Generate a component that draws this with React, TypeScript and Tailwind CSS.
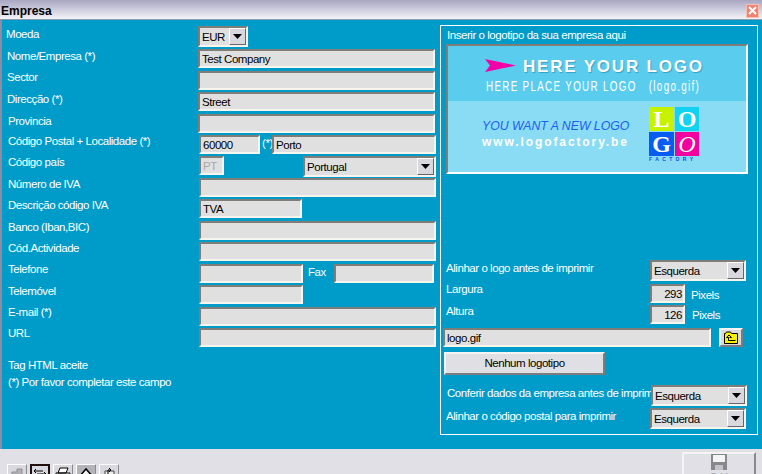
import type { ReactNode } from 'react';

const sunken =
  'border-2 border-t-[#807c78] border-l-[#807c78] border-r-[#f6f6ee] border-b-[#f6f6ee] bg-[#e0e0e0] text-black overflow-hidden whitespace-nowrap';

function Field({ className = '', children }: { className?: string; children?: ReactNode }) {
  return <div className={`${sunken} h-[19px] leading-[16px] pl-[2px] shrink-0 ${className}`}>{children}</div>;
}

function Select({ value, className = '' }: { value: string; className?: string }) {
  return (
    <div className={`${sunken} h-[21px] leading-[18px] pl-[2px] shrink-0 flex justify-between ${className}`}>
      <span>{value}</span>
      <div className="w-[17px] h-[17px] bg-[#d8d8de] border border-t-white border-l-white border-r-[#66666a] border-b-[#66666a] flex items-center justify-center">
        <svg width="9" height="5" viewBox="0 0 9 5">
          <path d="M0 0h9L4.500 5z" fill="#000" />
        </svg>
      </div>
    </div>
  );
}

function Row({ label, h, labelCls = '-mt-[2px]', children }: { label: string; h: string; labelCls?: string; children?: ReactNode }) {
  return (
    <div className={`flex items-start ${h}`}>
      <div className={`w-[192px] h-4 leading-4 shrink-0 pl-[1px] ${labelCls}`}>{label}</div>
      {children}
    </div>
  );
}

function LogoBanner() {
  return (
    <div className="w-[302px] h-[130px] border-2 border-t-[#807c78] border-l-[#807c78] border-r-white border-b-white flex flex-col whitespace-nowrap tracking-normal shadow-[inset_0_0_3px_#3aa8cc] font-['Liberation_Sans',sans-serif]">
      <div className="h-[55px] bg-[#5acdee] flex flex-col shrink-0">
        <div className="flex items-center h-[24px] mt-[9px]">
          <svg width="31" height="14" viewBox="0 0 31 14" className="ml-[37px] -mt-[2px] shrink-0">
            <path d="M0 0L31 6.500 0 13 5 6.500z" fill="#f400a8" />
          </svg>
          <span className="ml-[7px] text-[17px] leading-[24px] font-bold tracking-[1.8px] text-white [text-shadow:1px_1px_1px_#3a9dc0]">
            HERE YOUR LOGO
          </span>
        </div>
        <div className="ml-[38px] -mt-[1px] w-fit origin-left scale-x-[0.7] text-[14px] leading-[16px] tracking-[1.9px] text-white">
          HERE PLACE YOUR LOGO &nbsp;&nbsp;(logo.gif)
        </div>
      </div>
      <div className="flex-1 bg-[#8adcf4] flex">
        <div className="w-[201px] shrink-0 pl-[34px] pt-[17px]">
          <div className="text-[12.250px] leading-[16px] italic text-[#1a5ff0]">YOU WANT A NEW LOGO</div>
          <div className="text-[12px] leading-[14px] mt-[1px] font-bold tracking-[1.900px] text-white">www.logofactory.be</div>
        </div>
        <div className="pt-[6px] w-[50px]">
          <div className="grid grid-cols-[25px_24px] grid-rows-[24px_24px] gap-[1px] font-['Liberation_Serif',serif] font-bold text-[24px] leading-[24px] text-center text-white">
            <div className="bg-[#c6f200]">L</div>
            <div className="bg-[#12d2f4]">O</div>
            <div className="bg-[#0a5cf0]">G</div>
            <div className="bg-[#f400a0] italic font-normal">O</div>
          </div>
          <div className="text-[5px] leading-[6px] font-bold tracking-[3.400px] text-[#0a4ce0]">FACTORY</div>
        </div>
      </div>
    </div>
  );
}

function ToolButton({ active, dark, children }: { active?: boolean; dark?: boolean; children: ReactNode }) {
  const bg = dark ? 'bg-[#b4b4b8]' : 'bg-[#d8d8de]';
  return (
    <div
      className={`w-[20px] h-[20px] shrink-0 flex justify-center pt-[2px] ${bg} ${
        active
          ? 'border-2 border-[#201010]'
          : 'border border-t-white border-l-white border-r-[#8a8a90] border-b-[#8a8a90]'
      }`}
    >
      {children}
    </div>
  );
}

export default function App() {
  return (
    <div className="w-[762px] h-[474px] overflow-hidden bg-[#e0e0e6] text-[11.500px] tracking-[-0.45px] text-white font-['Liberation_Sans',sans-serif]">
      {/* title bar */}
      <div className="h-[19px] bg-linear-to-b from-[#a8a6c2] to-[#f4f4f8] flex items-center justify-between pl-[1px] pr-[3px]">
        <span className="text-black text-[12px] tracking-normal font-bold leading-4 mt-[2px]">Empresa</span>
        <div className="w-[13px] h-[14px] mt-[2px] bg-[#f08272] border border-[#f6c0b0] flex items-center justify-center">
          <svg width="9" height="9" viewBox="0 0 9 9">
            <path d="M1 1l7 7M8 1L1 8" stroke="#fff" strokeWidth="2" />
          </svg>
        </div>
      </div>

      {/* main blue panel */}
      <div className="h-[430px] bg-[#009cc9] border-l-2 border-t border-l-[#8c8ca4] border-t-[#8c9cb0] flex">
        <div className="w-[438px] shrink-0 pl-[3px] pt-[6px]">
          <div className="flex items-start h-[23px]">
            <div className="w-[193px] h-4 leading-4 pl-[1px] shrink-0">Moeda</div>
            <Select value="EUR" className="w-[50px]" />
          </div>
          <div className="pl-[1px]">
            <Row label="Nome/Empresa (*)" h="h-[22px]" labelCls="-mt-[1px]"><Field className="w-[237px]">Test Company</Field></Row>
            <Row label="Sector" h="h-[21px]"><Field className="w-[237px]" /></Row>
            <Row label="Direcção (*)" h="h-[22px]" labelCls="-mt-[1px]"><Field className="w-[237px]">Street</Field></Row>
            <Row label="Provincia" h="h-[21px]" labelCls="-mt-[1px] ml-[1px] -mr-[1px]"><Field className="w-[237px]" /></Row>
            <Row label="Código Postal + Localidade (*)" h="h-[21px]" labelCls="-mt-[2px] ml-[1px] -mr-[1px]">
              <Field className="w-[61px] ml-[1px]">60000</Field>
              <span className="ml-[2px] w-[10px] leading-[17px]">(*)</span>
              <Field className="w-[164px]">Porto</Field>
            </Row>
            <Row label="Código país" h="h-[22px]" labelCls="-mt-[2px] ml-[1px] -mr-[1px]">
              <Field className="w-[25px] ml-[1px] text-[#a8a8a8]!">PT</Field>
              <Select value="Portugal" className="w-[133px] ml-[79px]" />
            </Row>
            <Row label="Número de IVA" h="h-[21px]" labelCls="-mt-[2px] ml-[1px] -mr-[1px]"><Field className="w-[237px] ml-[1px]" /></Row>
            <Row label="Descrição código IVA" h="h-[22px]" labelCls="-mt-[2px] ml-[1px] -mr-[1px]"><Field className="w-[103px] ml-[1px]">TVA</Field></Row>
            <Row label="Banco (Iban,BIC)" h="h-[21px]" labelCls="-mt-[2px] ml-[1px] -mr-[1px]"><Field className="w-[237px] ml-[1px]" /></Row>
            <Row label="Cód.Actividade" h="h-[22px]" labelCls="-mt-[2px] ml-[1px] -mr-[1px]"><Field className="w-[237px] ml-[1px]" /></Row>
            <Row label="Telefone" h="h-[21px]" labelCls="-mt-[3px] ml-[1px] -mr-[1px]">
              <Field className="w-[104px] ml-[1px]" />
              <span className="ml-[5px] w-[26px] leading-[17px]">Fax</span>
              <Field className="w-[100px]" />
            </Row>
            <Row label="Telemóvel" h="h-[22px]" labelCls="-mt-[2px] ml-[1px] -mr-[1px]"><Field className="w-[104px] ml-[1px]" /></Row>
            <Row label="E-mail (*)" h="h-[21px]" labelCls="-mt-[3px] ml-[1px] -mr-[1px]"><Field className="w-[237px] ml-[1px]" /></Row>
            <Row label="URL" h="h-[29px]" labelCls="-mt-[3px] ml-[1px] -mr-[1px]"><Field className="w-[237px] ml-[1px]" /></Row>
            <div className="pl-[2px] leading-4">Tag HTML aceite</div>
            <div className="pl-[2px] leading-4 mt-[1px]">(*) Por favor completar este campo</div>
          </div>
        </div>

        {/* logo panel */}
        <div className="w-[318px] h-[410px] mt-[5px] border border-white pl-[5px] shrink-0">
          <div className="h-4 leading-4 mt-[1px] ml-[1px]">Inserir o logotipo da sua empresa aqui</div>
          <div className="mt-[1px]">
            <LogoBanner />
          </div>
          <div className="flex items-start mt-[86px] h-[24px]">
            <div className="w-[204px] shrink-0 leading-4">Alinhar o logo antes de imprimir</div>
            <Select value="Esquerda" className="w-[96px]" />
          </div>
          <div className="flex items-start h-[21px]">
            <div className="w-[204px] shrink-0 leading-4 -mt-[3px]">Largura</div>
            <Field className="w-[35px] text-right pr-[1px]">293</Field>
            <span className="ml-[6px] leading-4 mt-[3px]">Pixels</span>
          </div>
          <div className="flex items-start h-[23px]">
            <div className="w-[204px] shrink-0 leading-4 -mt-[2px]">Altura</div>
            <Field className="w-[35px] text-right pr-[1px]">126</Field>
            <span className="ml-[7px] leading-4 mt-[2px]">Pixels</span>
          </div>
          <div className="flex items-start h-[24px] -ml-[3px]">
            <Field className="w-[268px]">logo.gif</Field>
            <div className="ml-[8px] w-[24px] h-[19px] bg-[#d8d8de] border-2 border-t-[#f4f4f4] border-l-[#f4f4f4] border-r-[#7c7c80] border-b-[#7c7c80] flex items-center justify-center">
              <svg width="16" height="13" viewBox="0 0 16 13">
                <path d="M1.500 12.500V2.500h1l1-1.500h4l1 1.500h6v10z" fill="#f6f000" stroke="#000" />
                <path d="M6 4L3.500 6.500H5.500V9.500H12.500M6 4l2.500 2.500H6.500" fill="none" stroke="#000" />
              </svg>
            </div>
          </div>
          <div className="-ml-[2px] w-[161px] h-[23px] bg-[#e0e0e4] border-2 border-t-[#f4f4f4] border-l-[#f4f4f4] border-r-[#7c7c80] border-b-[#7c7c80] text-black text-center leading-[19px]">
            Nenhum logotipo
          </div>
          <div className="flex items-start mt-[10px] h-[23px]">
            <div className="w-[205px] shrink-0 leading-4 pl-[1px] overflow-hidden whitespace-nowrap">Conferir dados da empresa antes de imprimir</div>
            <Select value="Esquerda" className="w-[96px]" />
          </div>
          <div className="flex items-start h-[21px]">
            <div className="w-[204px] shrink-0 leading-4">Alinhar o código postal para imprimir</div>
            <Select value="Esquerda" className="w-[96px]" />
          </div>
        </div>
      </div>

      {/* bottom toolbar */}
      <div className="h-[25px] flex justify-between">
        <div className="flex gap-[3px] pl-[7px] pt-[15px]">
          <ToolButton>
            <svg width="16" height="12" viewBox="0 0 16 12">
              <path d="M3 5h5V2h5v10H8V8H3z" fill="#b0b0b4" stroke="#909094" />
            </svg>
          </ToolButton>
          <ToolButton active>
            <svg width="16" height="12" viewBox="0 0 16 12">
              <path d="M2 3h9M2 3l2-2M2 3l2 2M14 6H5M14 6l-2-2" fill="none" stroke="#000" />
              <rect x="3" y="6" width="10" height="6" fill="#f6f000" />
            </svg>
          </ToolButton>
          <ToolButton>
            <svg width="16" height="12" viewBox="0 0 16 12">
              <path d="M5 1h8l-2 5H3zM1 6h14v6H1z" fill="#fff" stroke="#000" />
            </svg>
          </ToolButton>
          <ToolButton dark>
            <svg width="16" height="12" viewBox="0 0 16 12">
              <path d="M1 10L8 2l7 8v2H1z" fill="#f4f4f4" />
              <path d="M1 10L8 2l7 8" fill="none" stroke="#000" strokeWidth="1.500" />
            </svg>
          </ToolButton>
          <ToolButton>
            <svg width="16" height="12" viewBox="0 0 16 12">
              <path d="M4 4h9v8H4z" fill="#eee" stroke="#444" />
              <path d="M7 8V3h3M8 1l2 2-2 2" fill="none" stroke="#000" />
            </svg>
          </ToolButton>
        </div>
        <div className="w-[74px] h-[40px] mr-[6px] mt-[3px] shrink-0 bg-[#e0e0e6] border-2 border-t-[#f4f4f4] border-l-[#f4f4f4] border-r-[#8a8a8e] border-b-[#8a8a8e] flex flex-col items-center">
          <svg width="16" height="16" viewBox="0 0 16 16" className="shrink-0">
            <path d="M0 0h16v16H0z" fill="#88888c" />
            <path d="M2 1h12v7H2z" fill="#f4f4f4" />
            <path d="M4 11h8v5H4z" fill="#c4c4c8" />
          </svg>
          <span className="text-[#a8a8ac] text-[13px] leading-[14px] tracking-[1px] mt-[1px]">OK</span>
        </div>
      </div>
    </div>
  );
}
